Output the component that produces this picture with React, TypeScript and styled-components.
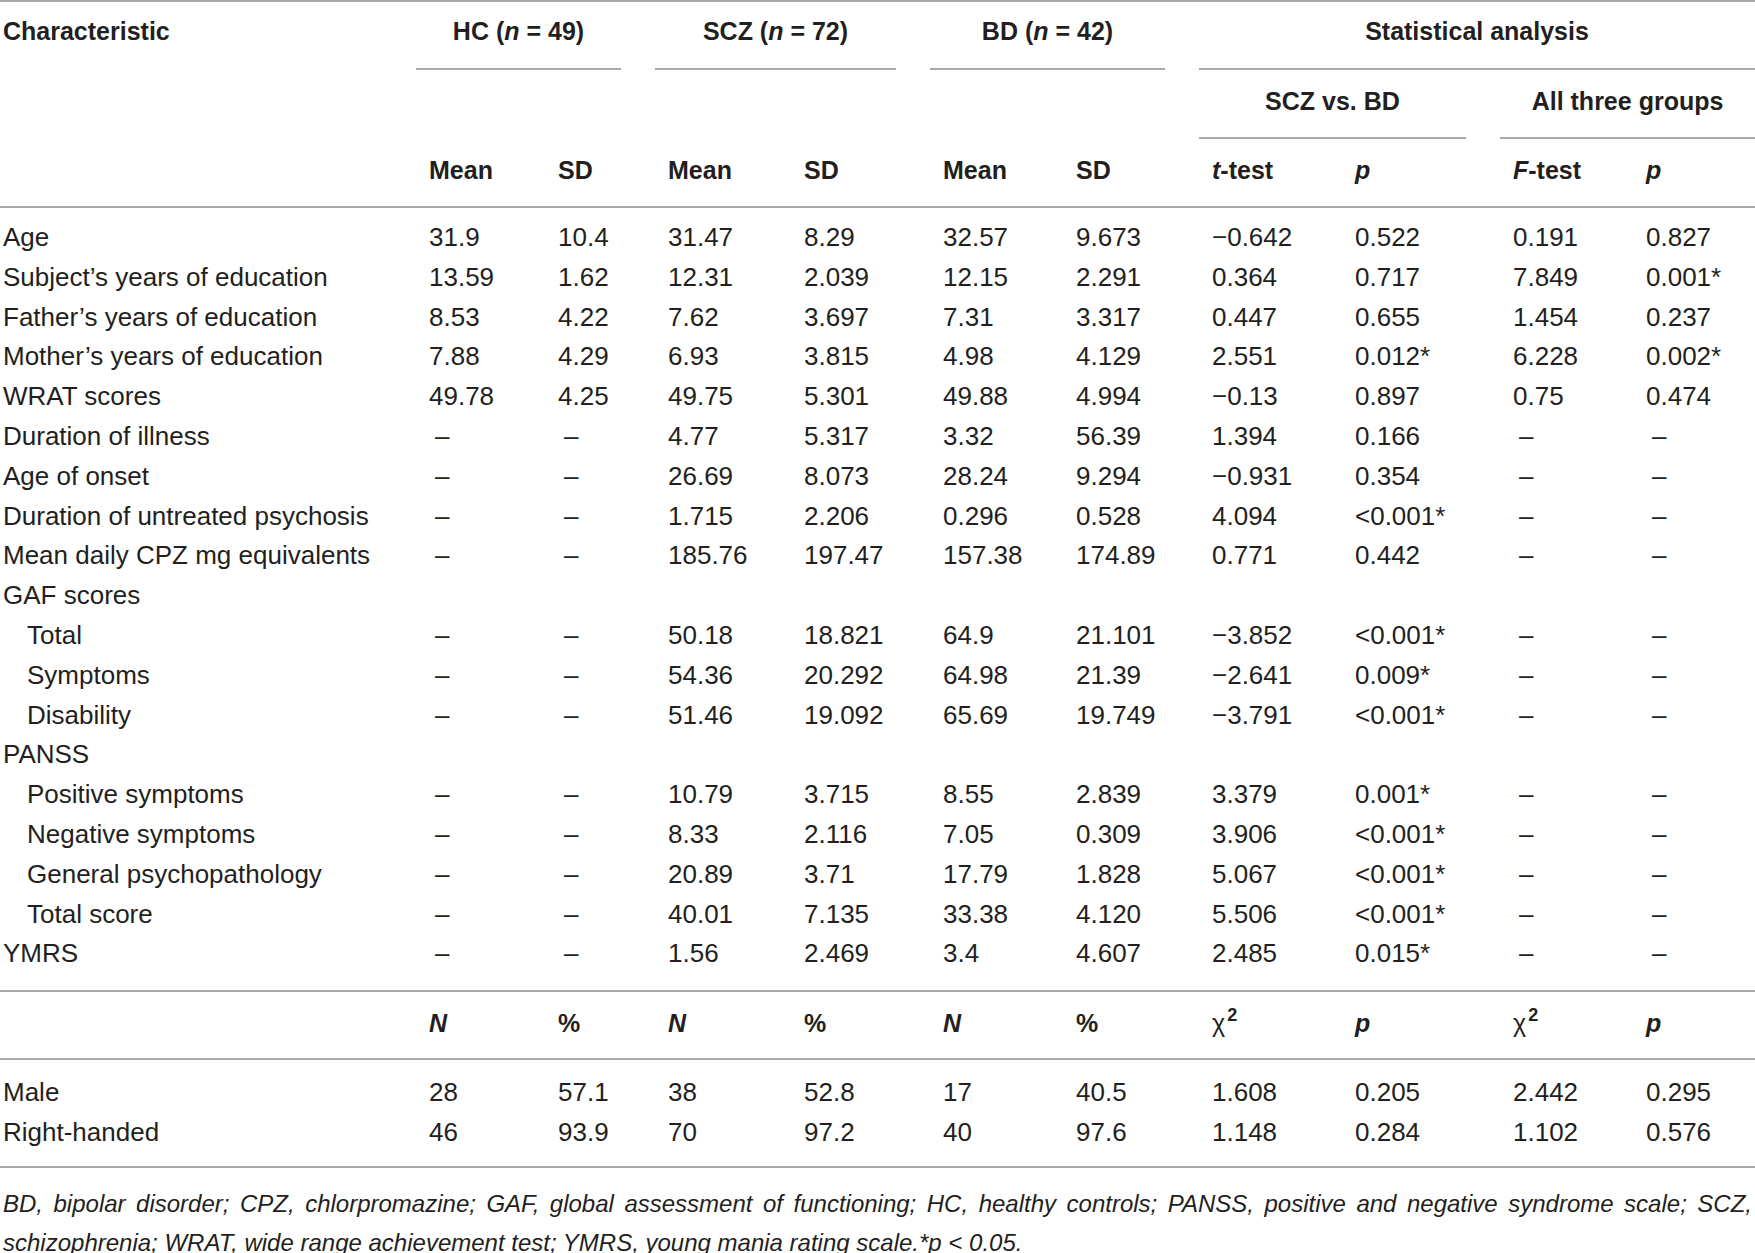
import React from 'react';
import styled, { createGlobalStyle } from 'styled-components';

const COLS = '416px 129px 110px 136px 139px 133px 136px 143px 158px 133px 122px';
const RULE = '#a7a9ac';
const INK = '#231f20';

const GlobalStyle = createGlobalStyle`
  html, body { margin: 0; padding: 0; background: #ffffff; }
  body {
    font-family: "Liberation Sans", Arial, "Helvetica Neue", sans-serif;
    color: ${INK};
  }
`;

const Table = styled.div`
  width: 1755px;
`;

const HeaderBlock = styled.div`
  display: grid;
  grid-template-columns: ${COLS};
  border-top: 2px solid ${RULE};
  border-bottom: 2px solid ${RULE};
  font-weight: 700;
  font-size: 25px;
  line-height: 30px;
`;

const ROW_PAD: Record<number, [number, number]> = {
  1: [14, 22],
  2: [16, 21],
  3: [16, 21],
};

const HeadCell = styled.div<{
  $row: number;
  $span?: number;
  $rule?: boolean;
  $gap?: boolean;
  $center?: boolean;
  $label?: boolean;
}>`
  grid-column: span ${(p) => p.$span ?? 1};
  padding-top: ${(p) => ROW_PAD[p.$row][0]}px;
  padding-bottom: ${(p) => ROW_PAD[p.$row][1]}px;
  padding-left: ${(p) => (p.$label ? 3 : p.$center ? 0 : 13)}px;
  margin-right: ${(p) => (p.$gap ? 34 : 0)}px;
  border-bottom: ${(p) => (p.$rule ? `2px solid ${RULE}` : 'none')};
  text-align: ${(p) => (p.$center ? 'center' : 'left')};
  white-space: nowrap;
`;

const Em = styled.i`
  font-style: italic;
`;

const Chi = styled.span`
  font-weight: 400;
`;

const Sup = styled.sup`
  font-weight: 700;
  font-size: 0.72em;
  line-height: 0;
  vertical-align: 0.62em;
  margin-left: 2px;
`;

const BodyBlock = styled.div<{ $pt: number; $pb: number; $rowH: number }>`
  display: grid;
  grid-template-columns: ${COLS};
  grid-auto-rows: ${(p) => p.$rowH}px;
  padding: ${(p) => p.$pt}px 0 ${(p) => p.$pb}px;
  border-bottom: 2px solid ${RULE};
  font-size: 26px;
  line-height: ${(p) => p.$rowH}px;
`;

const Cell = styled.div<{ $label?: boolean; $indent?: boolean }>`
  padding-left: ${(p) => (p.$label ? (p.$indent ? 27 : 3) : 13)}px;
  white-space: nowrap;
`;

const Dash = styled.span`
  margin-left: 6px;
`;

const SubHeadBlock = styled.div`
  display: grid;
  grid-template-columns: ${COLS};
  border-bottom: 2px solid ${RULE};
  font-weight: 700;
  font-size: 25px;
  line-height: 30px;
`;

const SubHeadCell = styled.div`
  padding: 16px 0 20px 13px;
  white-space: nowrap;
`;

const Footnote = styled.div`
  padding: 16px 3px 0 3px;
  font-style: italic;
  font-size: 24px;
  line-height: 39px;
`;

const FootLine = styled.div<{ $justify?: boolean }>`
  white-space: nowrap;
  text-align: ${(p) => (p.$justify ? 'justify' : 'left')};
  text-align-last: ${(p) => (p.$justify ? 'justify' : 'auto')};
`;

type Row = { label: string; indent?: boolean; values?: string[] };

const D = '–';

const mainRows: Row[] = [
  { label: 'Age', values: ['31.9', '10.4', '31.47', '8.29', '32.57', '9.673', '−0.642', '0.522', '0.191', '0.827'] },
  { label: 'Subject’s years of education', values: ['13.59', '1.62', '12.31', '2.039', '12.15', '2.291', '0.364', '0.717', '7.849', '0.001*'] },
  { label: 'Father’s years of education', values: ['8.53', '4.22', '7.62', '3.697', '7.31', '3.317', '0.447', '0.655', '1.454', '0.237'] },
  { label: 'Mother’s years of education', values: ['7.88', '4.29', '6.93', '3.815', '4.98', '4.129', '2.551', '0.012*', '6.228', '0.002*'] },
  { label: 'WRAT scores', values: ['49.78', '4.25', '49.75', '5.301', '49.88', '4.994', '−0.13', '0.897', '0.75', '0.474'] },
  { label: 'Duration of illness', values: [D, D, '4.77', '5.317', '3.32', '56.39', '1.394', '0.166', D, D] },
  { label: 'Age of onset', values: [D, D, '26.69', '8.073', '28.24', '9.294', '−0.931', '0.354', D, D] },
  { label: 'Duration of untreated psychosis', values: [D, D, '1.715', '2.206', '0.296', '0.528', '4.094', '<0.001*', D, D] },
  { label: 'Mean daily CPZ mg equivalents', values: [D, D, '185.76', '197.47', '157.38', '174.89', '0.771', '0.442', D, D] },
  { label: 'GAF scores' },
  { label: 'Total', indent: true, values: [D, D, '50.18', '18.821', '64.9', '21.101', '−3.852', '<0.001*', D, D] },
  { label: 'Symptoms', indent: true, values: [D, D, '54.36', '20.292', '64.98', '21.39', '−2.641', '0.009*', D, D] },
  { label: 'Disability', indent: true, values: [D, D, '51.46', '19.092', '65.69', '19.749', '−3.791', '<0.001*', D, D] },
  { label: 'PANSS' },
  { label: 'Positive symptoms', indent: true, values: [D, D, '10.79', '3.715', '8.55', '2.839', '3.379', '0.001*', D, D] },
  { label: 'Negative symptoms', indent: true, values: [D, D, '8.33', '2.116', '7.05', '0.309', '3.906', '<0.001*', D, D] },
  { label: 'General psychopathology', indent: true, values: [D, D, '20.89', '3.71', '17.79', '1.828', '5.067', '<0.001*', D, D] },
  { label: 'Total score', indent: true, values: [D, D, '40.01', '7.135', '33.38', '4.120', '5.506', '<0.001*', D, D] },
  { label: 'YMRS', values: [D, D, '1.56', '2.469', '3.4', '4.607', '2.485', '0.015*', D, D] },
];

const countRows: Row[] = [
  { label: 'Male', values: ['28', '57.1', '38', '52.8', '17', '40.5', '1.608', '0.205', '2.442', '0.295'] },
  { label: 'Right-handed', values: ['46', '93.9', '70', '97.2', '40', '97.6', '1.148', '0.284', '1.102', '0.576'] },
];

const renderValue = (v: string) => (v === D ? <Dash>{D}</Dash> : v);

const renderRows = (rows: Row[]) =>
  rows.map((r) => (
    <React.Fragment key={r.label}>
      <Cell $label $indent={r.indent}>
        {r.label}
      </Cell>
      {(r.values ?? Array(10).fill('')).map((v, i) => (
        <Cell key={i}>{renderValue(v)}</Cell>
      ))}
    </React.Fragment>
  ));

const ChiSq = () => (
  <Chi>
    χ<Sup>2</Sup>
  </Chi>
);

export default function App() {
  return (
    <>
      <GlobalStyle />
      <Table>
        <HeaderBlock>
          <HeadCell $row={1} $label>
            Characteristic
          </HeadCell>
          <HeadCell $row={1} $span={2} $rule $gap $center>
            HC (<Em>n</Em> = 49)
          </HeadCell>
          <HeadCell $row={1} $span={2} $rule $gap $center>
            SCZ (<Em>n</Em> = 72)
          </HeadCell>
          <HeadCell $row={1} $span={2} $rule $gap $center>
            BD (<Em>n</Em> = 42)
          </HeadCell>
          <HeadCell $row={1} $span={4} $rule $center>
            Statistical analysis
          </HeadCell>

          <HeadCell $row={2} $label />
          <HeadCell $row={2} $span={6} />
          <HeadCell $row={2} $span={2} $rule $gap $center>
            SCZ vs. BD
          </HeadCell>
          <HeadCell $row={2} $span={2} $rule $center>
            All three groups
          </HeadCell>

          <HeadCell $row={3} $label />
          <HeadCell $row={3}>Mean</HeadCell>
          <HeadCell $row={3}>SD</HeadCell>
          <HeadCell $row={3}>Mean</HeadCell>
          <HeadCell $row={3}>SD</HeadCell>
          <HeadCell $row={3}>Mean</HeadCell>
          <HeadCell $row={3}>SD</HeadCell>
          <HeadCell $row={3}>
            <Em>t</Em>-test
          </HeadCell>
          <HeadCell $row={3}>
            <Em>p</Em>
          </HeadCell>
          <HeadCell $row={3}>
            <Em>F</Em>-test
          </HeadCell>
          <HeadCell $row={3}>
            <Em>p</Em>
          </HeadCell>
        </HeaderBlock>

        <BodyBlock $pt={10} $pb={16} $rowH={39.8}>
          {renderRows(mainRows)}
        </BodyBlock>

        <SubHeadBlock>
          <SubHeadCell />
          <SubHeadCell>
            <Em>N</Em>
          </SubHeadCell>
          <SubHeadCell>%</SubHeadCell>
          <SubHeadCell>
            <Em>N</Em>
          </SubHeadCell>
          <SubHeadCell>%</SubHeadCell>
          <SubHeadCell>
            <Em>N</Em>
          </SubHeadCell>
          <SubHeadCell>%</SubHeadCell>
          <SubHeadCell>
            <ChiSq />
          </SubHeadCell>
          <SubHeadCell>
            <Em>p</Em>
          </SubHeadCell>
          <SubHeadCell>
            <ChiSq />
          </SubHeadCell>
          <SubHeadCell>
            <Em>p</Em>
          </SubHeadCell>
        </SubHeadBlock>

        <BodyBlock $pt={12} $pb={14} $rowH={40}>
          {renderRows(countRows)}
        </BodyBlock>

        <Footnote>
          <FootLine $justify>
            BD, bipolar disorder; CPZ, chlorpromazine; GAF, global assessment of functioning; HC,
            healthy controls; PANSS, positive and negative syndrome scale; SCZ,
          </FootLine>
          <FootLine>
            schizophrenia; WRAT, wide range achievement test; YMRS, young mania rating scale.*p &lt; 0.05.
          </FootLine>
        </Footnote>
      </Table>
    </>
  );
}
